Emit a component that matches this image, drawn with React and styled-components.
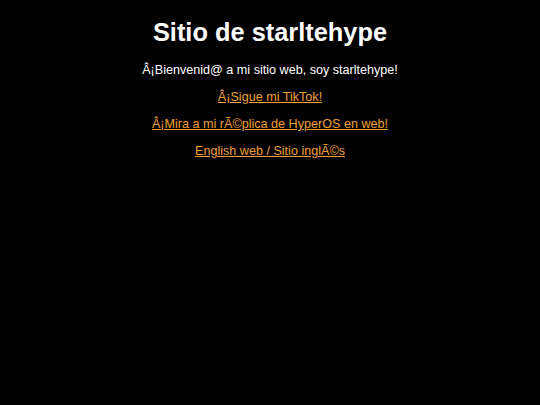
import React from "react";
import styled, { createGlobalStyle } from "styled-components";

const Global = createGlobalStyle`
  html, body { margin: 0; padding: 0; background: #000; }
  body { font-family: "Liberation Sans", Arial, sans-serif; color: #fff; }
`;

const Page = styled.main`
  display: flex;
  flex-direction: column;
  align-items: center;
  padding-top: 16px;
  text-align: center;
`;

const Title = styled.h1`
  margin: 0 0 14px;
  font-size: 25.4px;
  font-weight: bold;
  line-height: 32px;
`;

const Text = styled.p`
  margin: 0 0 11px;
  font-size: 12.6px;
  line-height: 16px;
`;

const Link = styled.a`
  color: #f0a030;
  text-decoration: underline;
`;

export default function App() {
  return (
    <>
      <Global />
      <Page>
        <Title>Sitio de starltehype</Title>
        <Text>Â¡Bienvenid@ a mi sitio web, soy starltehype!</Text>
        <Text><Link href="#">Â¡Sigue mi TikTok!</Link></Text>
        <Text><Link href="#">Â¡Mira a mi rÃ©plica de HyperOS en web!</Link></Text>
        <Text><Link href="#">English web / Sitio inglÃ©s</Link></Text>
      </Page>
    </>
  );
}
